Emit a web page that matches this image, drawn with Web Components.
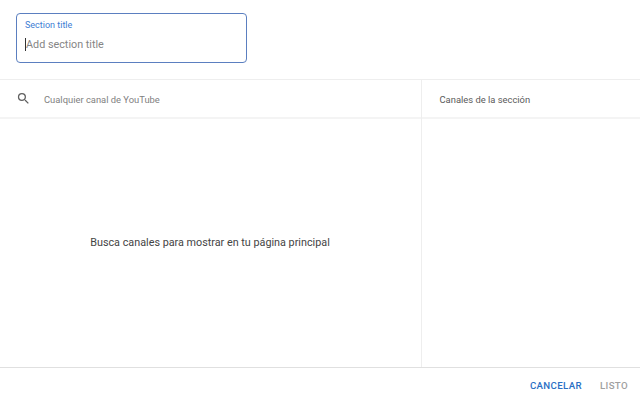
<!DOCTYPE html>
<html><head><meta charset="utf-8"><style>
html,body{margin:0;padding:0;background:#fff}
body{width:640px;height:401px;overflow:hidden;font-family:Roboto,sans-serif}
</style></head><body>
<section-editor></section-editor>
<script>
function def(name, html){
  customElements.define(name, class extends HTMLElement{
    constructor(){super();this.attachShadow({mode:'open'}).innerHTML=html;}
  });
}
def('title-field',`<style>
:host{display:block;padding:13px 16px 0;height:66px;box-sizing:content-box;border-bottom:1px solid #eee}
.box{box-sizing:border-box;width:231px;height:50px;border:1px solid #5b7fc0;border-radius:4px;padding:5px 8px 0 8px}
.l{font-size:9px;line-height:12px;color:#3d7dd4}
.i{display:flex;align-items:center;margin-top:4px;height:19px;font-size:10.8px;color:#858585}
.c{width:1px;height:13px;background:#333}
</style><div class="box"><div class="l">Section title</div><div class="i"><span class="c"></span><span>Add section title</span></div></div>`);
def('search-head',`<style>
:host{display:flex;align-items:center;flex:none;height:37px;border-bottom:2px solid #f4f4f4;padding-left:16px}
svg{width:15px;height:15px;display:block;margin-right:13px;margin-top:-1px}
span{font-size:9.4px;color:#7f7f7f;position:relative;top:.5px}
</style><svg viewBox="0 0 24 24"><path fill="#606060" d="M15.5 14h-.79l-.28-.27A6.47 6.47 0 0 0 16 9.5 6.5 6.5 0 1 0 9.5 16c1.61 0 3.09-.59 4.23-1.57l.27.28v.79l5 4.99L20.49 19l-4.99-5zm-6 0C7.01 14 5 11.99 5 9.5S7.01 5 9.5 5 14 7.01 14 9.5 11.99 14 9.5 14z"/></svg><span>Cualquier canal de YouTube</span>`);
def('search-pane',`<style>
:host{display:flex;flex-direction:column;width:421px;flex:none;border-right:1px solid #eee}
.e{flex:1;display:flex;align-items:center;justify-content:center;font-size:10.8px;color:#444;padding:0 1px 2px 0}
</style><search-head></search-head><div class="e">Busca canales para mostrar en tu página principal</div>`);
def('channel-pane',`<style>
:host{display:block;flex:1}
.h{height:37px;border-bottom:2px solid #f4f4f4;display:flex;align-items:center;padding-left:17.5px;font-size:9.4px;color:#5a5a5a}
.h span{position:relative;top:.5px}
</style><div class="h"><span>Canales de la sección</span></div>`);
def('action-bar',`<style>
:host{display:flex;justify-content:flex-end;align-items:center;gap:18px;height:33px;border-top:1px solid #e0e0e0;padding:2px 12px 0 0;box-sizing:border-box;font-size:9.7px;font-weight:500;letter-spacing:.35px}
.a{color:#2a6fc4}.b{color:#a0a0a0}
</style><span class="a">CANCELAR</span><span class="b">LISTO</span>`);
def('section-editor',`<style>
:host{display:flex;flex-direction:column;width:640px;height:401px}
.m{display:flex;height:287px}
</style><title-field></title-field><div class="m"><search-pane></search-pane><channel-pane></channel-pane></div><action-bar></action-bar>`);
</script></body></html>
